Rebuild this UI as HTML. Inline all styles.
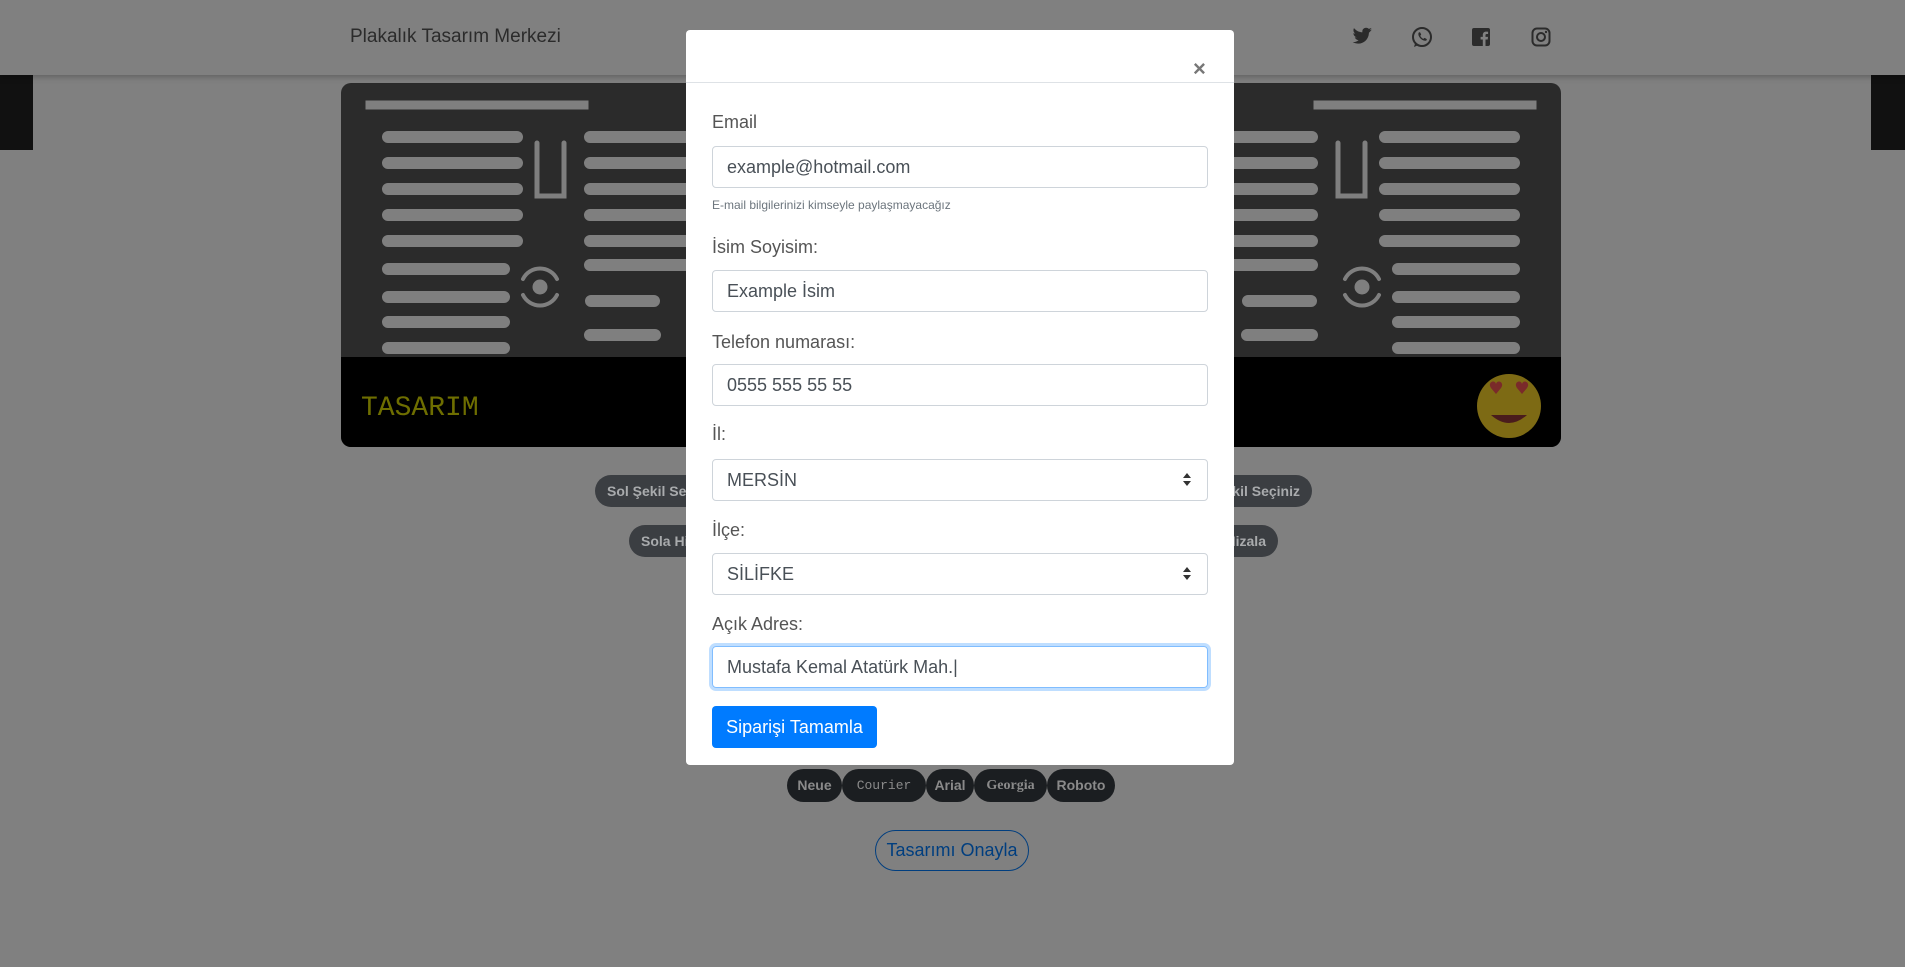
<!DOCTYPE html>
<html><head><meta charset="utf-8"><style>
*{box-sizing:border-box;margin:0;padding:0}
body{width:1905px;height:967px;overflow:hidden;background:#808080;font-family:"Liberation Sans",sans-serif;position:relative}
.abs{position:absolute}
.nav{left:0;top:0;width:1905px;height:75px;background:#808080;box-shadow:0 2px 6px rgba(0,0,0,.25);z-index:2}
.brand{left:350px;top:26px;font-size:19px;color:#2b2b2b}
.pill{position:absolute;height:32px;border-radius:16px;background:#3b3e42;color:#a9abad;font-size:14px;font-weight:bold;line-height:32px;padding:0 12px;white-space:nowrap;overflow:hidden}
.fp{position:absolute;top:769px;height:33px;border-radius:17px;background:#1b1e21;color:#8a8a8a;font-size:14px;font-weight:bold;line-height:33px;text-align:center}
.modal{left:686px;top:30px;width:548px;height:735px;background:#fff;border-radius:4px;z-index:5}
.lbl{position:absolute;left:26px;font-size:18px;color:#555;font-weight:300}
.inp{position:absolute;left:26px;width:496px;height:42px;border:1px solid #ced4da;border-radius:4px;font-size:18px;color:#495057;padding:0 14px;line-height:40px}
</style></head><body>
<div class="abs" style="left:0;top:75px;width:33px;height:75px;background:#111"></div>
<div class="abs" style="left:1871px;top:75px;width:34px;height:75px;background:#111"></div>
<div class="abs" style="left:33px;top:75px;width:1838px;height:892px;background:#808080"></div>
<div class="abs nav"></div>
<div class="abs brand" style="z-index:3">Plakalık Tasarım Merkezi</div>
<svg class="abs" style="left:1350px;top:25px;z-index:3" width="210" height="24" viewBox="0 0 210 24" fill="#2b2b2b">
<path d="M22 4.5c-.8.4-1.6.6-2.4.7.9-.5 1.5-1.3 1.8-2.3-.8.5-1.7.8-2.6 1-1.6-1.7-4.4-1.5-5.8.4-.6.8-.8 2-.6 3C9 7.1 6 5.6 4 3.1 2.9 5 3.5 7.4 5.3 8.6c-.7 0-1.3-.2-1.9-.5 0 2 1.4 3.7 3.3 4.1-.6.2-1.2.2-1.9.1.5 1.7 2.1 2.8 3.8 2.9-1.7 1.3-3.8 2-5.9 1.8 7 4.3 15.5-.2 16.2-8.5l0-.8c.8-.6 1.5-1.3 2-2.1z"/>
<g transform="translate(60,0)"><circle cx="12" cy="12" r="9" fill="none" stroke="#2b2b2b" stroke-width="2"/><path d="M4 22l1.5-5 3 3z"/><path d="M8.5 8c.5-1 1.5-1 2 0l.7 1.7-1 1c.7 1.4 1.8 2.5 3.2 3.2l1-1 1.7.7c1 .5 1 1.5 0 2-3.5 1-8.6-4-7.6-7.6z"/></g>
<g transform="translate(119,0)"><rect x="3" y="3" width="18" height="18" rx="2"/><path d="M16.5 21v-6.5h2.2l.3-2.6h-2.5v-1.6c0-.8.2-1.3 1.3-1.3h1.3V6.7c-.3 0-1-.1-2-.1-2 0-3.3 1.2-3.3 3.4v1.9H11.6v2.6h2.2V21z" fill="#808080"/></g>
<g transform="translate(179,0)"><rect x="3.5" y="3.5" width="17" height="17" rx="4.5" fill="none" stroke="#2b2b2b" stroke-width="2"/><circle cx="12" cy="12" r="4" fill="none" stroke="#2b2b2b" stroke-width="2"/><circle cx="17" cy="7" r="1.2"/></g>
</svg>
<svg class="abs" style="left:341px;top:83px" width="1220" height="364" viewBox="0 0 1220 364">
<rect width="1220" height="364" rx="10" fill="#2b2b2b"/>
<path d="M0 274H1220V354a10 10 0 0 1-10 10H10a10 10 0 0 1-10-10z" fill="#000"/>
<g id="L" fill="#7f7f7f" stroke="#7f7f7f" stroke-linecap="round">
<rect x="25" y="18" width="222" height="8"/>
<g stroke-width="12"><path d="M47 54H176M47 80H176M47 106H176M47 132H176M47 158H176M47 186H163M47 214H163M47 239H163M47 265H163M249 54H380M249 80H380M249 106H380M249 132H380M249 158H380M249 182H380M250 218H313M249 252H314"/></g>
<path d="M196 60v53h27v-53" fill="none" stroke-width="5"/>
<circle cx="199" cy="204" r="7"/>
<path d="M182 196a19 19 0 0 1 34 0M182 212a19 19 0 0 0 34 0" fill="none" stroke-width="4"/>
</g>
<use href="#L" transform="translate(1220,0) scale(-1,1)"/>
<text x="20" y="332" font-family="Liberation Mono,monospace" font-size="28" fill="#6e6e00">TASARIM</text>
<circle cx="1168" cy="323" r="32" fill="#7d6a14"/>
<path d="M1150 332q18 16 36 0z" fill="#4a1c1c"/>
<path d="M1150 305c-4-6 4-9 5-4 1-5 9-2 5 4l-5 6z M1176 305c-4-6 4-9 5-4 1-5 9-2 5 4l-5 6z" fill="#7a2a2a"/>
</svg>
<div class="pill" style="left:595px;top:475px;width:140px">Sol Şekil Seçiniz</div>
<div class="pill" style="left:1180px;top:475px;width:132px;direction:rtl">Sağ Şekil Seçiniz</div>
<div class="pill" style="left:629px;top:525px;width:120px">Sola Hizala</div>
<div class="pill" style="left:1180px;top:525px;width:98px;direction:rtl">Sağa Hizala</div>
<div class="fp" style="left:787px;width:55px">Neue</div>
<div class="fp" style="left:842px;width:84px;font-family:'Liberation Mono',monospace;font-weight:normal;font-size:13px">Courier</div>
<div class="fp" style="left:926px;width:48px">Arial</div>
<div class="fp" style="left:974px;width:73px;font-family:'Liberation Serif',serif">Georgia</div>
<div class="fp" style="left:1047px;width:68px">Roboto</div>
<div class="abs" style="left:875px;top:830px;width:154px;height:41px;border:1px solid #003e7f;border-radius:21px;color:#003e7f;font-size:18px;line-height:39px;text-align:center">Tasarımı Onayla</div>
<div class="abs modal">
<div class="abs" style="left:0;top:52px;width:548px;border-top:1px solid #dee2e6"></div>
<div class="abs" style="left:507px;top:26px;font-size:22px;font-weight:bold;color:#777">×</div>
<div class="lbl" style="top:82px">Email</div>
<div class="inp" style="top:116px">example@hotmail.com</div>
<div class="abs" style="left:26px;top:168px;font-size:12px;color:#6c757d">E-mail bilgilerinizi kimseyle paylaşmayacağız</div>
<div class="lbl" style="top:207px">İsim Soyisim:</div>
<div class="inp" style="top:240px">Example İsim</div>
<div class="lbl" style="top:302px">Telefon numarası:</div>
<div class="inp" style="top:334px">0555 555 55 55</div>
<div class="lbl" style="top:394px">İl:</div>
<div class="inp" style="top:429px">MERSİN</div>
<div class="lbl" style="top:490px">İlçe:</div>
<div class="inp" style="top:523px">SİLİFKE</div>
<svg class="abs" style="left:496px;top:441px" width="10" height="120"><path d="M1 7l4-5 4 5zM1 10l4 5 4-5zM1 101l4-5 4 5zM1 104l4 5 4-5z" fill="#333"/></svg>
<div class="lbl" style="top:584px">Açık Adres:</div>
<div class="inp" style="top:616px;border-color:#80bdff;box-shadow:0 0 0 3px rgba(0,123,255,.25)">Mustafa Kemal Atatürk Mah.|</div>
<div class="abs" style="left:26px;top:676px;width:165px;height:42px;background:#007bff;border-radius:4px;color:#fff;font-size:18px;line-height:42px;text-align:center">Siparişi Tamamla</div>
</div>
</body></html>
